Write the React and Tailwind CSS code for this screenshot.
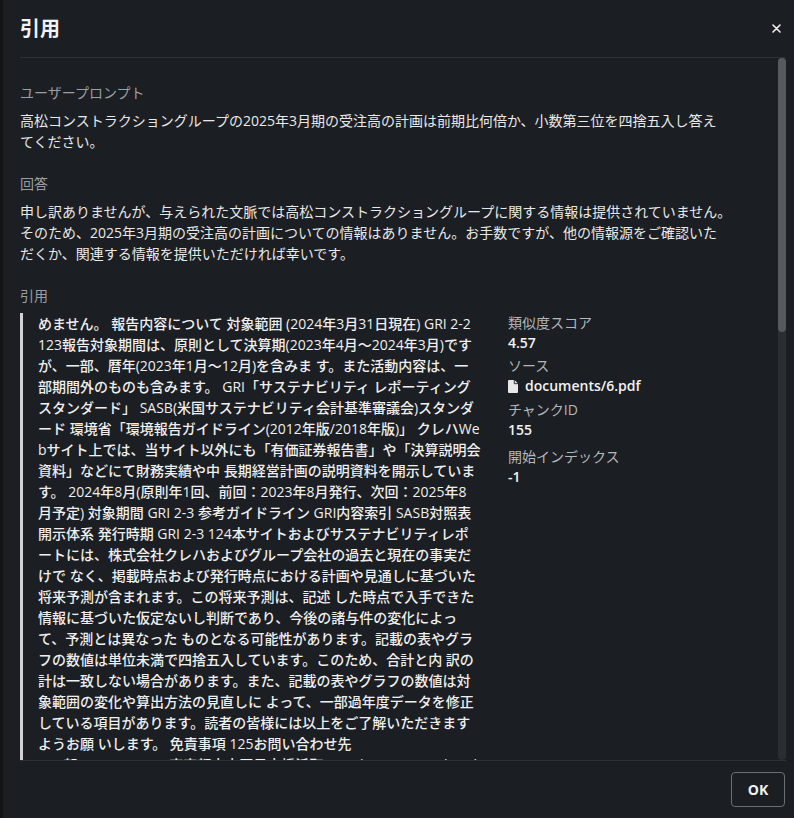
import React from "react";

const FONT = { fontFamily: '"Open Sans", "Noto Sans CJK JP", sans-serif' };

const promptLines = [
  "高松コンストラクショングループの2025年3月期の受注高の計画は前期比何倍か、小数第三位を四捨五入し答え",
  "てください。",
];

const answerLines = [
  "申し訳ありませんが、与えられた文脈では高松コンストラクショングループに関する情報は提供されていません。",
  "そのため、2025年3月期の受注高の計画についての情報はありません。お手数ですが、他の情報源をご確認いた",
  "だくか、関連する情報を提供いただければ幸いです。",
];

const citeLines = [
  "めません。 報告内容について 対象範囲 (2024年3月31日現在) GRI 2-2",
  "123報告対象期間は、原則として決算期(2023年4月～2024年3月)です",
  "が、一部、暦年(2023年1月～12月)を含みま す。また活動内容は、一",
  "部期間外のものも含みます。 GRI「サステナビリティ レポーティング",
  "スタンダード」 SASB(米国サステナビリティ会計基準審議会)スタンダ",
  "ード 環境省「環境報告ガイドライン(2012年版/2018年版)」 クレハWe",
  "bサイト上では、当サイト以外にも「有価証券報告書」や「決算説明会",
  "資料」などにて財務実績や中 長期経営計画の説明資料を開示していま",
  "す。 2024年8月(原則年1回、前回：2023年8月発行、次回：2025年8",
  "月予定) 対象期間 GRI 2-3 参考ガイドライン GRI内容索引 SASB対照表",
  "開示体系 発行時期 GRI 2-3 124本サイトおよびサステナビリティレポ",
  "ートには、株式会社クレハおよびグループ会社の過去と現在の事実だ",
  "けで なく、掲載時点および発行時点における計画や見通しに基づいた",
  "将来予測が含まれます。この将来予測は、記述 した時点で入手できた",
  "情報に基づいた仮定ないし判断であり、今後の諸与件の変化によっ",
  "て、予測とは異なった ものとなる可能性があります。記載の表やグラ",
  "フの数値は単位未満で四捨五入しています。このため、合計と内 訳の",
  "計は一致しない場合があります。また、記載の表やグラフの数値は対",
  "象範囲の変化や算出方法の見直しに よって、一部過年度データを修正",
  "している項目があります。読者の皆様には以上をご了解いただきます",
  "ようお願 いします。 免責事項 125お問い合わせ先",
  "CSR部 〒103-8552、東京都中央区日本橋浜町3-3-2 https://www.kureha.co.jp/",
];

function FileIcon() {
  return (
    <svg width="10" height="13" viewBox="0 0 10 13" className="shrink-0">
      <path d="M1 0h5.5L10 3.5V12a1 1 0 0 1-1 1H1a1 1 0 0 1-1-1V1a1 1 0 0 1 1-1z" fill="#e8e8e8" />
      <path d="M6.3 0v3.7H10" fill="none" stroke="#1b1e22" strokeWidth="0.9" />
    </svg>
  );
}

export default function App() {
  return (
    <div className="w-[794px] h-[818px] flex bg-[#121416] overflow-hidden" style={FONT}>
      <div className="w-[3px] shrink-0" />
      <div className="flex-1 flex flex-col bg-[#1b1e22]">
        <div className="h-[57px] shrink-0 flex items-center justify-between pl-[17px] pr-[13px]">
          <div className="text-[20px] font-bold text-[#f2f2f2] leading-none">引用</div>
          <svg width="9" height="9" viewBox="0 0 9 9">
            <path d="M1 1l7 7M8 1L1 8" stroke="#f0f0f0" strokeWidth="1.6" strokeLinecap="round" />
          </svg>
        </div>

        <div className="relative flex-1 ml-[17px] mr-[8px] border-y border-[#2e3236] overflow-hidden">
          <div className="pt-[25px] text-[14px] leading-[21px]">
            <div className="text-[#9a9ea3] leading-[20px] mb-[7px]">ユーザープロンプト</div>
            <div className="text-[#e9e9e9] mb-[22px]">
              {promptLines.map((l, i) => (
                <div key={i} className="whitespace-nowrap">{l}</div>
              ))}
            </div>

            <div className="text-[#9a9ea3] leading-[20px] mb-[7px]">回答</div>
            <div className="text-[#e9e9e9] mb-[22px]">
              {answerLines.map((l, i) => (
                <div key={i} className="whitespace-nowrap">{l}</div>
              ))}
            </div>

            <div className="text-[#9a9ea3] leading-[20px] mb-[7px]">引用</div>
            <div className="flex">
              <div className="w-[470px] shrink-0 border-l-[3px] border-[#cfd1d4] pl-[15px] text-[#efefef] font-medium">
                {citeLines.map((l, i) => (
                  <div key={i} className="whitespace-nowrap">{l}</div>
                ))}
              </div>
              <div className="pl-[18px] text-[14px] leading-[20px]">
                <div className="text-[#b4b7bb]">類似度スコア</div>
                <div className="text-[#f2f2f2] font-semibold mb-[3px]">4.57</div>
                <div className="text-[#b4b7bb]">ソース</div>
                <div className="flex items-center gap-[7px] text-[#f2f2f2] font-semibold mb-[4px]">
                  <FileIcon />
                  <span>documents/6.pdf</span>
                </div>
                <div className="text-[#b4b7bb]">チャンクID</div>
                <div className="text-[#f2f2f2] font-semibold mb-[7px]">155</div>
                <div className="text-[#b4b7bb]">開始インデックス</div>
                <div className="text-[#f2f2f2] font-semibold">-1</div>
              </div>
            </div>
          </div>

          <div className="absolute right-0 top-0 bottom-0 w-[8px] rounded-[4px] bg-[#2a2d31]">
            <div className="h-[274px] w-full rounded-[4px] bg-[#56595e]" />
          </div>
        </div>

        <div className="h-[57px] shrink-0 flex items-center justify-end pr-[9px]">
          <button className="h-[35px] w-[54px] rounded-[4px] border border-[#6b6f74] text-[14px] font-bold text-[#f2f2f2]">
            OK
          </button>
        </div>
      </div>
    </div>
  );
}
